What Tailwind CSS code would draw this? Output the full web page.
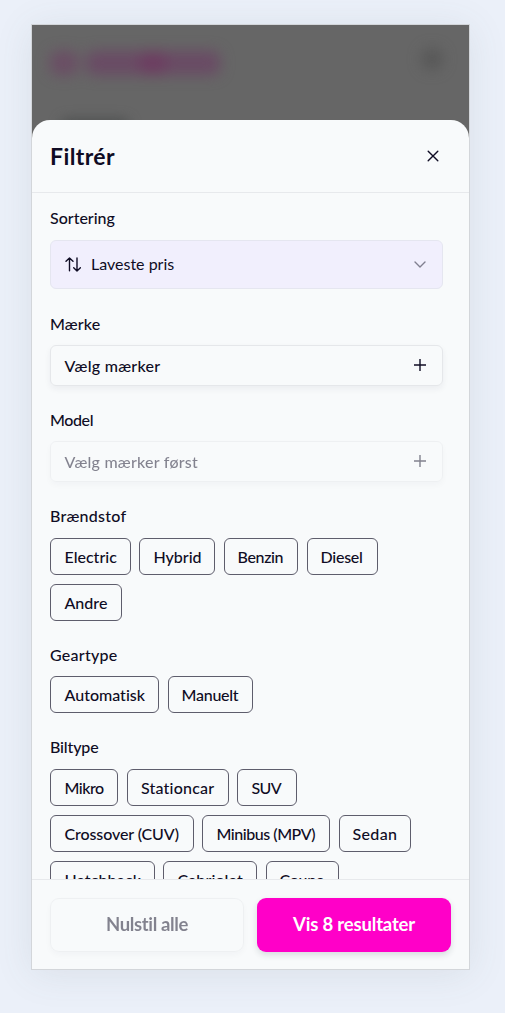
<!DOCTYPE html>
<html lang="da">
<head>
<meta charset="utf-8">
<title>Filtrér</title>
<script src="https://cdn.jsdelivr.net/npm/@tailwindcss/browser@4"></script>
</head>
<body class="h-[1013px] overflow-hidden bg-[#ebf0f9] px-[31px] pt-6 font-['Lato',sans-serif] text-base font-medium text-[#0f0c24] [font-variant-ligatures:none]">
<main class="relative flex h-[946px] w-[439px] flex-col overflow-hidden border border-[#d3d6da] bg-[#666666] shadow-[0_4px_36px_rgba(80,100,100,0.11)]">

  <!-- Dimmed page behind the sheet -->
  <div class="flex h-[95px] shrink-0 items-start justify-between pl-[18px] pr-[26px] pt-[25px]">
    <div class="mt-px flex gap-2 blur-[7px]">
      <div class="h-6 w-7 rounded-lg bg-[#6e3d64]/60"></div>
      <div class="flex h-6 w-[134px] justify-center rounded-lg bg-[#6b4164]/75"><div class="h-6 w-7 rounded-full bg-[#702f5e]/45"></div></div>
    </div>
    <div class="-mt-0.5 h-[22px] w-[22px] rounded-full bg-[#505050]/65 blur-[7px]"></div>
  </div>
  <div class="absolute left-7 top-[93px] h-4 w-[70px] rounded-full bg-[#484b4b]/70 blur-[6px]"></div>

  <section class="relative flex min-h-0 flex-1 flex-col overflow-hidden rounded-t-[18px] bg-[#f8fafb]">
    <header class="flex h-[73px] shrink-0 items-center justify-between border-b border-[#e7e9ec] pl-[18px] pr-[30px]">
      <h1 class="text-[23px] font-bold leading-7 tracking-[0.4px]">Filtrér</h1>
      <svg class="h-3 w-3" viewBox="0 0 12 12" fill="none" stroke="currentColor" stroke-width="1.4" stroke-linecap="round"><path d="M1.2 1.2l9.6 9.6M10.8 1.2l-9.6 9.6"/></svg>
    </header>

    <div class="min-h-0 flex-1 overflow-hidden pl-[18px] pr-[26.5px] pt-[15px]">
      <h2 class="h-5 leading-5">Sortering</h2>
      <div class="mt-[11.5px] flex h-[49.5px] items-center rounded-[6px] border border-[#e5e6f0] bg-[#f1effd] pl-[14px] pr-4">
        <svg class="h-[15px] w-4" viewBox="0 0 16 15" fill="none" stroke="currentColor" stroke-width="1.4" stroke-linecap="round" stroke-linejoin="round"><path d="M4.5 13.8V1.2M1 4.3l3.5-3.3L8 4.3M12 .9v12.8M8.7 10.7l3.3 3.2 3.4-3.2"/></svg>
        <span class="ml-[10px] font-normal">Laveste pris</span>
        <svg class="ml-auto h-[7px] w-3" viewBox="0 0 12 7" fill="none" stroke="#817f90" stroke-width="1.4" stroke-linecap="round" stroke-linejoin="round"><path d="M1 1l5 5 5-5"/></svg>
      </div>

      <h2 class="mt-[25px] h-5 leading-5 tracking-[0.1px]">Mærke</h2>
      <div class="mt-[11px] flex h-[41px] items-center justify-between rounded-[6px] border border-[#e5e7ea] pl-[13.5px] pr-4 shadow-[0_3px_6px_rgba(30,40,60,0.06)]">
        <span class="tracking-[0.27px]">Vælg mærker</span>
        <svg class="-mt-0.5 h-3 w-3" viewBox="0 0 12 12" fill="none" stroke="currentColor" stroke-width="1.4"><path d="M6 0v12M0 6h12"/></svg>
      </div>

      <h2 class="mt-6 h-5 leading-5 tracking-[-0.4px]">Model</h2>
      <div class="mt-[11px] flex h-[41px] items-center justify-between rounded-[6px] border border-[#e5e7ea] pl-[13.5px] pr-4 opacity-50 shadow-[0_3px_6px_rgba(30,40,60,0.06)]">
        <span class="tracking-[0.22px]">Vælg mærker først</span>
        <svg class="-mt-0.5 h-3 w-3" viewBox="0 0 12 12" fill="none" stroke="currentColor" stroke-width="1.4"><path d="M6 0v12M0 6h12"/></svg>
      </div>

      <h2 class="mt-6 h-5 leading-5 tracking-[0.25px]">Brændstof</h2>
      <div class="mt-3 grid gap-[9px] whitespace-nowrap">
        <div class="flex gap-[8.5px]">
          <div class="flex h-[37px] w-[80.5px] items-center rounded-[6px] border border-[#5e5d6c] pl-[13.5px]">Electric</div>
          <div class="flex h-[37px] w-[76px] items-center rounded-[6px] border border-[#5e5d6c] pl-[13.5px]">Hybrid</div>
          <div class="flex h-[37px] w-[74.5px] items-center rounded-[6px] border border-[#5e5d6c] pl-[13px] tracking-[-0.35px]">Benzin</div>
          <div class="flex h-[37px] w-[71px] items-center rounded-[6px] border border-[#5e5d6c] pl-[13px] tracking-[-0.25px]">Diesel</div>
        </div>
        <div class="flex gap-[8.5px]">
          <div class="flex h-[37px] w-[72px] items-center rounded-[6px] border border-[#5e5d6c] pl-[13.5px]">Andre</div>
        </div>
      </div>

      <h2 class="mt-6 h-5 leading-5 tracking-[0.25px]">Geartype</h2>
      <div class="mt-[11px] flex gap-[8.5px] whitespace-nowrap">
        <div class="flex h-[37px] w-[109px] items-center rounded-[6px] border border-[#5e5d6c] pl-[13.5px]">Automatisk</div>
        <div class="flex h-[37px] w-[85.5px] items-center rounded-[6px] border border-[#5e5d6c] pl-[13px] tracking-[-0.25px]">Manuelt</div>
      </div>

      <h2 class="mt-6 h-5 leading-5 tracking-[-0.15px]">Biltype</h2>
      <div class="mt-3 grid gap-[9px] whitespace-nowrap">
        <div class="flex gap-[8.5px]">
          <div class="flex h-[37px] w-[68px] items-center rounded-[6px] border border-[#5e5d6c] pl-[13.5px] tracking-[-0.5px]">Mikro</div>
          <div class="flex h-[37px] w-[102px] items-center rounded-[6px] border border-[#5e5d6c] pl-[13.5px] tracking-[0.2px]">Stationcar</div>
          <div class="flex h-[37px] w-[59.5px] items-center rounded-[6px] border border-[#5e5d6c] pl-[13.5px] tracking-[-0.6px]">SUV</div>
        </div>
        <div class="flex gap-[8.5px]">
          <div class="flex h-[37px] w-[143.5px] items-center rounded-[6px] border border-[#5e5d6c] pl-[13.5px] tracking-[-0.1px]">Crossover (CUV)</div>
          <div class="flex h-[37px] w-[128px] items-center rounded-[6px] border border-[#5e5d6c] pl-[13.5px] tracking-[-0.46px]">Minibus (MPV)</div>
          <div class="flex h-[37px] w-[72px] items-center rounded-[6px] border border-[#5e5d6c] pl-[13px] tracking-[0.35px]">Sedan</div>
        </div>
        <div class="flex gap-[8.5px]">
          <div class="flex h-[37px] w-[104.5px] items-center rounded-[6px] border border-[#5e5d6c] pl-[13.5px] tracking-[0.17px]">Hatchback</div>
          <div class="flex h-[37px] w-[94px] items-center rounded-[6px] border border-[#5e5d6c] pl-[13.5px] tracking-[0.1px]">Cabriolet</div>
          <div class="flex h-[37px] w-[73.5px] items-center rounded-[6px] border border-[#5e5d6c] pl-[13px] tracking-[-0.25px]">Coupe</div>
        </div>
      </div>
    </div>

    <footer class="flex h-[90px] shrink-0 gap-[13px] border-t border-[#e7e9ec] px-[18px] pt-[17.5px] text-[18.5px]">
      <button class="h-[54px] w-[194px] rounded-[9px] border border-[#e5e7ea] font-bold tracking-[-0.35px] opacity-50 shadow-[0_3px_6px_rgba(30,40,60,0.06)]">Nulstil alle</button>
      <button class="h-[54px] w-[194px] rounded-[9px] bg-[#ff00c8] font-bold tracking-[-0.17px] text-white shadow-[0_3px_6px_rgba(30,40,60,0.14)]">Vis 8 resultater</button>
    </footer>
  </section>
</main>
</body>
</html>
